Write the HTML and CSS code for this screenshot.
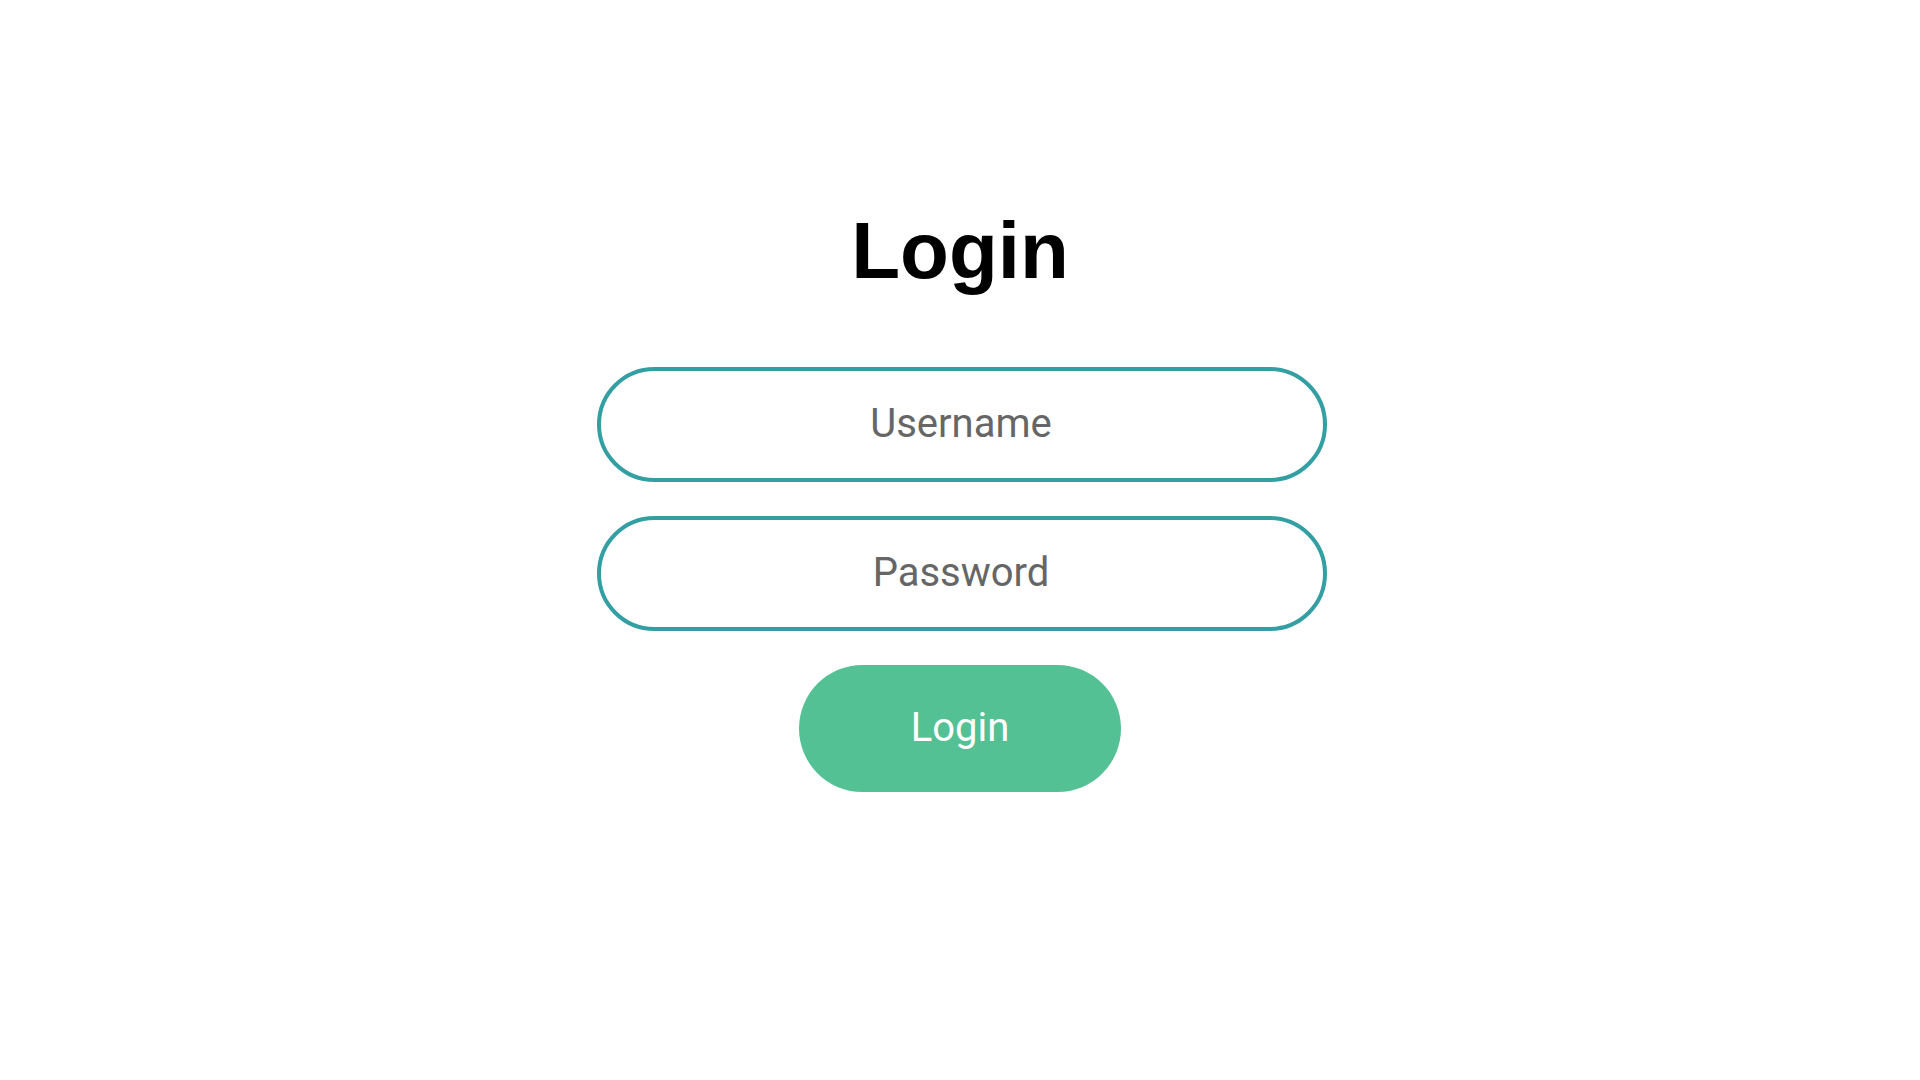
FILE: index.html
```html
<html>
<head>
<title>Login</title>
<link rel="stylesheet" href="styles.css">
</head>
<body>
<div id="main-content">
  <h1>Login</h1>
  <form id="login-form">
    <input type="text" name="username" placeholder="Username">
    <input type="password" name="password" placeholder="Password">
    <button type="submit">Login</button>
  </form>
</div>
</body>
</html>
```

FILE: styles.css
```css
body {
  padding: 0;
  margin: 0;
  background: white;
}

/* Centered column with the title and the form */
#main-content {
  display: flex;
  flex-direction: column;
  align-items: center;
  padding-top: 205px;
}

h1 {
  margin: 0 0 70px 0;
  font-family: "Liberation Sans", Arial, sans-serif;
  font-weight: bold;
  font-size: 80px;
  line-height: 92px;
  color: black;
}

#login-form {
  display: flex;
  flex-direction: column;
  align-items: center;
  gap: 34px;
}

#login-form input {
  box-sizing: border-box;
  width: 730px;
  height: 115px;
  margin-left: 4px;
  padding: 0 2px 2px 0;
  border: 4px solid #349fa3;
  border-radius: 58px;
  outline: none;
  background: white;
  font-family: Roboto, sans-serif;
  font-size: 40px;
  text-align: center;
  color: #333;
}
#login-form input::placeholder {
  color: #666;
}

#login-form button {
  width: 322px;
  height: 127px;
  padding: 0 0 2px 0;
  border: none;
  border-radius: 64px;
  background: #53c193;
  color: white;
  font-family: Roboto, sans-serif;
  font-size: 40px;
  cursor: pointer;
}
```
